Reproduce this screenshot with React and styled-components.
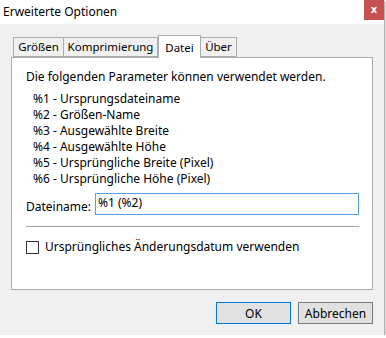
import React from "react";
import styled, { createGlobalStyle } from "styled-components";

const GlobalStyle = createGlobalStyle`
  body {
    margin: 0;
    background: #ffffff;
    font-family: "Noto Sans", "Segoe UI", sans-serif;
    font-size: 12px;
    color: #000;
  }
`;

const Window = styled.div`
  width: 384px;
  height: 335px;
  display: flex;
  flex-direction: column;
  background: #f0f0f0;
  box-shadow: 1px 1px 0 #b4b4b4, 2px 2px 1px #dadada;
`;

const TitleBar = styled.div`
  height: 24px;
  flex: none;
  background: #fff;
  display: flex;
  align-items: flex-start;
  justify-content: space-between;
`;

const Title = styled.div`
  padding: 4px 0 0 3px;
  line-height: 16px;
`;

const CloseButton = styled.button`
  width: 20px;
  height: 20px;
  border: none;
  padding: 0 0 2px;
  background: #c75050;
  color: #fff;
  font-family: "DejaVu Sans", sans-serif;
  font-weight: bold;
  font-size: 10px;
  display: flex;
  align-items: center;
  justify-content: center;
`;

const Body = styled.div`
  flex: 1;
  display: flex;
  flex-direction: column;
  padding: 11px 11px 0 11px;
`;

const TabStrip = styled.div`
  display: flex;
  align-items: flex-end;
  padding-left: 2px;
  height: 23px;
  position: relative;
  z-index: 1;
  margin-bottom: -1px;
`;

const Tab = styled.div`
  width: ${(p) => p.$w}px;
  height: ${(p) => (p.$active ? "23px" : "20px")};
  margin-bottom: ${(p) => (p.$active ? "0" : "1px")};
  box-sizing: border-box;
  padding-top: ${(p) => (p.$active ? "1px" : "0")};
  border: 1px solid #acacac;
  border-bottom: ${(p) => (p.$active ? "none" : "1px solid #acacac")};
  border-left: ${(p) => (p.$first || p.$active ? "1px solid #acacac" : "none")};
  background: ${(p) => (p.$active ? "#fff" : "#f0f0f0")};
  display: flex;
  align-items: center;
  justify-content: center;
  font-size: 11.5px;
  line-height: 16px;
  white-space: nowrap;
`;

const Panel = styled.div`
  height: 233px;
  box-sizing: border-box;
  border: 1px solid #acacac;
  background: #fff;
  padding: 11px 13px 0 14px;
  display: flex;
  flex-direction: column;
`;

const Intro = styled.div`
  line-height: 16px;
`;

const ParamList = styled.ul`
  list-style: none;
  margin: 6px 0 0;
  padding: 0 0 0 7px;
  line-height: 16px;
`;

const FieldRow = styled.div`
  display: flex;
  align-items: center;
  margin-top: 6px;
  gap: 4px;
`;

const FieldLabel = styled.label`
  padding-top: 5px;
`;

const TextInput = styled.input`
  flex: 1;
  height: 22px;
  box-sizing: border-box;
  border: 1px solid #569de5;
  outline: none;
  padding: 0 2px 4px;
  font: inherit;
  color: #000;
`;

const Separator = styled.hr`
  border: none;
  border-top: 1px solid #a0a0a0;
  margin: 11px 0 0;
`;

const CheckRow = styled.label`
  display: flex;
  align-items: center;
  gap: 6px;
  margin-top: 12px;
  line-height: 16px;
`;

const Box = styled.span`
  width: 13px;
  height: 13px;
  box-sizing: border-box;
  border: 1px solid #333;
  background: #fff;
`;

const Footer = styled.div`
  display: flex;
  justify-content: flex-end;
  gap: 7px;
  padding-top: 12px;
`;

const Button = styled.button`
  width: 75px;
  height: 22px;
  box-sizing: border-box;
  background: #e1e1e1;
  border: 1px solid ${(p) => (p.$default ? "#0078d7" : "#7a7a7a")};
  font: inherit;
  color: #000;
  padding: 0;
`;

const params = [
  "%1 - Ursprungsdateiname",
  "%2 - Größen-Name",
  "%3 - Ausgewählte Breite",
  "%4 - Ausgewählte Höhe",
  "%5 - Ursprüngliche Breite (Pixel)",
  "%6 - Ursprüngliche Höhe (Pixel)",
];

export default function App() {
  return (
    <>
      <GlobalStyle />
      <Window>
        <TitleBar>
          <Title>Erweiterte Optionen</Title>
          <CloseButton>x</CloseButton>
        </TitleBar>
        <Body>
          <TabStrip>
            <Tab $first $w={51}>Größen</Tab>
            <Tab $w={94}>Komprimierung</Tab>
            <Tab $active $w={43}>Datei</Tab>
            <Tab $w={36}>Über</Tab>
          </TabStrip>
          <Panel>
            <Intro>Die folgenden Parameter können verwendet werden.</Intro>
            <ParamList>
              {params.map((p) => (
                <li key={p}>{p}</li>
              ))}
            </ParamList>
            <FieldRow>
              <FieldLabel>Dateiname:</FieldLabel>
              <TextInput defaultValue="%1 (%2)" />
            </FieldRow>
            <Separator />
            <CheckRow>
              <Box />
              Ursprüngliches Änderungsdatum verwenden
            </CheckRow>
          </Panel>
          <Footer>
            <Button $default>OK</Button>
            <Button>Abbrechen</Button>
          </Footer>
        </Body>
      </Window>
    </>
  );
}
